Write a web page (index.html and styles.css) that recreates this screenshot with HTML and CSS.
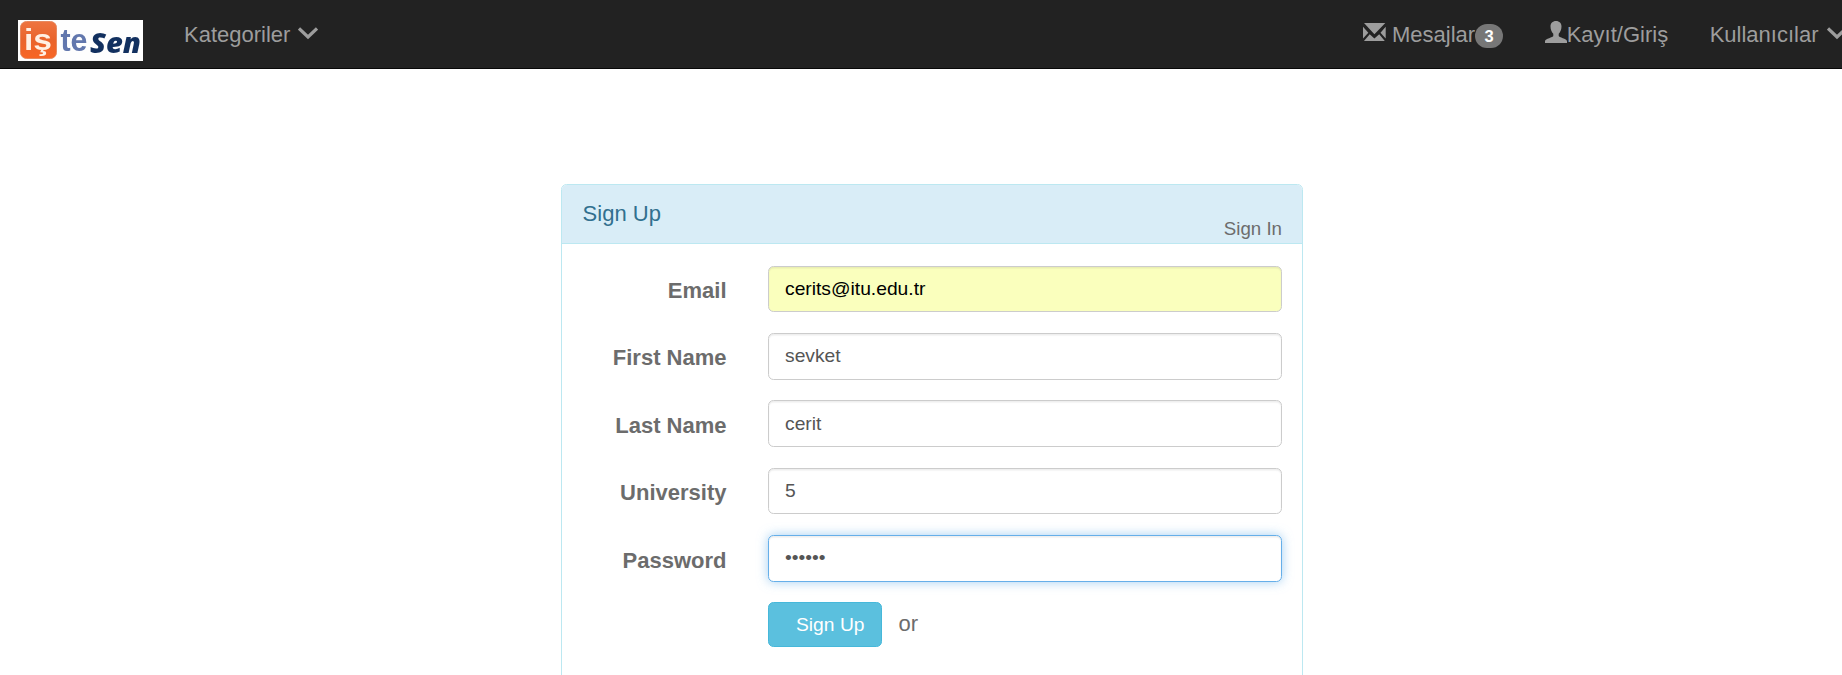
FILE: index.html
```html
<!DOCTYPE html>
<html lang="tr">
<head>
<meta charset="utf-8">
<title>İşteSen</title>
<link rel="stylesheet" href="styles.css">
</head>
<body>
<nav class="navbar">
  <a class="brand">
    <svg class="logo" width="125" height="41" viewBox="0 0 125 41">
      <defs><linearGradient id="tile" x1="0" y1="0" x2="0" y2="1"><stop offset="0" stop-color="#ee7440"/><stop offset=".5" stop-color="#e9642c"/><stop offset="1" stop-color="#f86524"/></linearGradient></defs>
      <rect width="125" height="41" fill="#fefefe"/>
      <rect x="2.5" y="1.5" width="36" height="37" rx="6" fill="url(#tile)" stroke="#e7895f"/>
      <text class="logo-is" x="6" y="30" textLength="28" lengthAdjust="spacingAndGlyphs">iş</text>
      <text class="logo-te" x="42.500" y="31" textLength="27" lengthAdjust="spacingAndGlyphs">te</text>
      <text class="logo-sen" x="72" y="32.500" textLength="51" lengthAdjust="spacingAndGlyphs">Sen</text>
    </svg>
  </a>
  <a class="nav-link">Kategoriler<svg class="chevron" width="20" height="13" viewBox="0 0 20 13"><path d="M1 1.500 10 10 19 1.500"/></svg></a>
  <div class="nav-right">
    <a class="nav-link"><svg class="envelope" width="23" height="18" viewBox="0 0 23 18"><path d="M1 0H22.300L11.400 11.300ZM0 3.800 5.300 9.700 0 15.500ZM22.700 3.800V15.500L17.500 9.700ZM1 18 6.700 11.200 11.400 15.500 16.200 11.200 21.800 18Z"/></svg>Mesajlar<span class="badge">3</span></a>
    <a class="nav-link"><svg class="user" width="22" height="22" viewBox="0 0 22 22"><path d="M11 0C14.400 0 16.500 2.300 16.500 5.500C16.500 8.800 15.200 11.200 13.700 12.700V15C13.700 16.300 22 17.800 22 20.200V22H0V20.200C0 17.800 8.300 16.300 8.300 15V12.700C6.800 11.200 5.500 8.800 5.500 5.500C5.500 2.300 7.600 0 11 0Z"/></svg>Kayıt/Giriş</a>
    <a class="nav-link">Kullanıcılar<svg class="chevron" width="20" height="13" viewBox="0 0 20 13"><path d="M1 1.500 10 10 19 1.500"/></svg></a>
  </div>
</nav>
<main class="panel">
  <header class="panel-heading">
    <div class="panel-title">Sign Up</div>
    <a class="sign-in">Sign In</a>
  </header>
  <form class="panel-body">
    <div class="row"><label class="label">Email</label><input class="control autofilled" type="text" value="cerits@itu.edu.tr"></div>
    <div class="row"><label class="label">First Name</label><input class="control" type="text" value="sevket"></div>
    <div class="row"><label class="label">Last Name</label><input class="control" type="text" value="cerit"></div>
    <div class="row"><label class="label">University</label><input class="control" type="text" value="5"></div>
    <div class="row"><label class="label">Password</label><input class="control focused" type="password" value="123456"></div>
    <div class="row"><span></span><div class="actions"><button class="btn" type="button">Sign Up</button><span class="or">or</span></div></div>
  </form>
</main>
</body>
</html>
```
FILE: styles.css
```css
* { box-sizing: border-box; }
html, body { height: 100%; }
body {
  margin: 0;
  overflow: hidden;
  background: #fff;
  color: #6c6c6c;
  font: 22px/31.4px "Liberation Sans", Arial, sans-serif;
}
.navbar {
  display: flex;
  align-items: flex-start;
  width: 1848px;
  height: 69px;
  padding-left: 18px;
  background: #222;
  border-bottom: 1px solid #080808;
}
.brand { margin: 20px 41px 0 0; height: 41px; }
.logo { display: block; filter: blur(0.4px); }
.logo text { font-family: "Liberation Sans", Arial, sans-serif; font-weight: 700; }
.logo .logo-is { font-size: 30px; fill: #fff0e4; }
.logo .logo-te { font-size: 32px; fill: #6277ad; }
.logo .logo-sen { font-family: "Open Sans", sans-serif; font-size: 29px; fill: #12305f; font-style: italic; font-weight: 800; }
.nav-link {
  display: flex;
  align-items: flex-start;
  padding-top: 19px;
  color: #9d9d9d;
  white-space: nowrap;
}
.nav-link svg { flex: none; fill: currentColor; }
.nav-link .chevron { margin: 8px 0 0 8px; fill: none; stroke: currentColor; stroke-width: 3.2; }
.nav-link .envelope { margin: 4px 6px 0 0; }
.nav-link .user { margin-top: 2px; }
.nav-right { display: flex; gap: 41.5px; margin-left: auto; padding-right: 1.500px; }
.badge {
  width: 28px;
  height: 24px;
  margin-top: 5px;
  border-radius: 14px;
  background: #777;
  color: #fff;
  font-size: 16.5px;
  font-weight: 700;
  line-height: 24px;
  text-align: center;
}
.panel {
  width: 742px;
  height: 520px;
  margin: 115px 0 0 561px;
  border: 1px solid #bce8f1;
  border-radius: 5.5px;
  background: #fff;
}
.panel-heading {
  display: flex;
  justify-content: space-between;
  height: 59px;
  padding: 12.700px 20px 0 20.600px;
  border-bottom: 1px solid #bce8f1;
  border-radius: 4.500px 4.500px 0 0;
  background: #d9edf7;
}
.panel-title { color: #31708f; }
.sign-in { margin-top: 15px; font-size: 18.700px; color: #6c6c6c; }
.panel-body { padding: 21.500px 20px 0 21px; }
.row {
  display: grid;
  grid-template-columns: 143.500px 514px;
  justify-content: space-between;
  margin-bottom: 20.625px;
}
.label { padding-top: 9.600px; text-align: right; font-weight: 700; white-space: nowrap; }
.control {
  width: 100%;
  height: 46.750px;
  padding: 8.250px 16px;
  border: 1px solid #ccc;
  border-radius: 5.500px;
  outline: 0;
  background: #fff;
  box-shadow: inset 0 1.400px 1.400px rgba(0, 0, 0, .075);
  color: #555;
  font: 19.250px/27.500px "Liberation Sans", Arial, sans-serif;
}
.autofilled { background: #faffbd; color: #000; }
.focused {
  border-color: #66afe9;
  box-shadow: inset 0 1.400px 1.400px rgba(0, 0, 0, .075), 0 0 11px rgba(102, 175, 233, .6);
}
.actions { display: flex; align-items: flex-start; gap: 16.500px; }
.btn {
  width: 114px;
  height: 45px;
  padding: 0 17px 0 27px;
  border: 1px solid #46b8da;
  border-radius: 5.500px;
  background: #5bc0de;
  color: #fff;
  font: 19.250px/43px "Liberation Sans", Arial, sans-serif;
  white-space: nowrap;
}
.or { padding-top: 5.500px; }
```
